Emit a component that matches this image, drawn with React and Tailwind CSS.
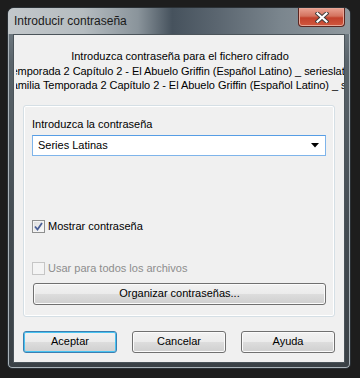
import React from "react";

const font = { fontFamily: '"Liberation Sans", Arial, sans-serif' };

function Button({ children, primary }) {
  return (
    <div
      className={`flex h-[22px] w-[94px] items-center justify-center rounded-[3px] border text-[11px] text-black ${
        primary
          ? "border-[#3c7fb1] shadow-[inset_0_0_0_1px_#48c3f1]"
          : "border-[#707070] shadow-[inset_0_0_0_1px_#fbfbfb]"
      } bg-[linear-gradient(to_bottom,#f2f2f2_0%,#ebebeb_50%,#dddddd_51%,#cfcfcf_100%)]`}
    >
      {children}
    </div>
  );
}

function Checkbox({ checked, disabled }) {
  return (
    <div
      className={`flex h-[13px] w-[13px] shrink-0 items-center justify-center border ${
        disabled
          ? "border-[#c6c6c6] bg-[#f4f4f4]"
          : "border-[#8e8f8f] bg-[linear-gradient(135deg,#dcdcdc,#fbfbfb)] shadow-[inset_0_0_0_1px_#f4f4f4]"
      }`}
    >
      {checked && (
        <svg width="9" height="9" viewBox="0 0 9 9">
          <path d="M1 4.5 L3.5 7.5 L8 1" fill="none" stroke="#4a5f97" strokeWidth="1.8" />
        </svg>
      )}
    </div>
  );
}

export default function App() {
  return (
    <div className="h-[378px] w-[360px] bg-[#1d1d1d] p-[7px]" style={font}>
      <div className="relative flex h-[362px] w-[344px] flex-col rounded-t-[7px] rounded-b-[5px] border border-[#2a3035] bg-[linear-gradient(to_bottom,#7d8890_0%,#5a646b_15%,#444c52_60%,#3a4146_100%)] shadow-[inset_0_0_0_1px_#aab3b9]">
        {/* title bar */}
        <div className="flex h-[26px] items-center rounded-t-[6px] bg-[linear-gradient(to_right,#c3c8cb_0%,#b5bcc0_22%,#8a949b_38%,#46525d_48%,#5c6771_62%,#7b868e_80%,#8f989e_100%)] pl-[6px] text-[12px] text-[#1a1a1a]">
          Introducir contraseña
        </div>
        {/* close button */}
        <div className="absolute right-[5px] top-0 flex h-[19px] w-[47px] items-center justify-center rounded-b-[4px] border border-t-0 border-[#5b2620] bg-[linear-gradient(to_bottom,#eaa293_0%,#d3725e_45%,#c2412c_55%,#d0583f_100%)] shadow-[inset_0_0_0_1px_#e8a797]">
          <svg width="14" height="11" viewBox="0 0 14 11">
            <path d="M2.5 1.5 L11.5 9.5 M11.5 1.5 L2.5 9.5" stroke="#3b3b3b" strokeWidth="4" strokeLinecap="square" />
            <path d="M2.5 1.5 L11.5 9.5 M11.5 1.5 L2.5 9.5" stroke="#ffffff" strokeWidth="2.2" strokeLinecap="square" />
          </svg>
        </div>
        {/* client area */}
        <div className="mx-[5px] flex h-[329px] flex-col border border-[#4b545a] bg-[#f0f0f0] text-[11px] text-black">
          <div className="ml-[2px] mt-[14px] overflow-hidden leading-[14.5px]">
            <div className="whitespace-nowrap text-center">Introduzca contraseña para el fichero cifrado</div>
            <div className="ml-[-10px] whitespace-nowrap tracking-[-0.05px]">
              Temporada 2 Capítulo 2 - El Abuelo Griffin (Español Latino) _ serieslatinas
            </div>
            <div className="ml-[-11px] whitespace-nowrap tracking-[-0.05px]">
              Familia Temporada 2 Capítulo 2 - El Abuelo Griffin (Español Latino) _ serieslatinas
            </div>
          </div>
          {/* group box */}
          <div className="mx-[9px] mt-[12px] flex h-[212px] flex-col rounded-[3px] border border-[#d5dfe5] px-[8px] shadow-[inset_0_0_0_1px_#ffffff]">
            <div className="mt-[11px] leading-[15px]">Introduzca la contraseña</div>
            <div className="mt-[3px] flex h-[21px] items-center justify-between border border-[#7eb4ea] border-t-[#569de5] bg-white pl-[5px] pr-[6px]">
              <span>Series Latinas</span>
              <svg width="8" height="5" viewBox="0 0 8 5">
                <path d="M0 0 H8 L4 4.5 Z" fill="#000" />
              </svg>
            </div>
            <div className="mt-[64px] flex h-[13px] items-center gap-[3px] leading-[13px]">
              <Checkbox checked />
              <span>Mostrar contraseña</span>
            </div>
            <div className="mt-[29px] flex h-[13px] items-center gap-[3px] leading-[13px] text-[#8d8d8d]">
              <Checkbox disabled />
              <span>Usar para todos los archivos</span>
            </div>
            <div className="ml-[1px] mt-[8px] flex h-[22px] items-center justify-center rounded-[3px] border border-[#707070] bg-[linear-gradient(to_bottom,#f2f2f2_0%,#ebebeb_50%,#dddddd_51%,#cfcfcf_100%)] shadow-[inset_0_0_0_1px_#fbfbfb]">
              Organizar contraseñas...
            </div>
          </div>
          <div className="mx-[9px] mt-[14px] flex justify-between">
            <Button primary>Aceptar</Button>
            <Button>Cancelar</Button>
            <Button>Ayuda</Button>
          </div>
        </div>
      </div>
    </div>
  );
}
